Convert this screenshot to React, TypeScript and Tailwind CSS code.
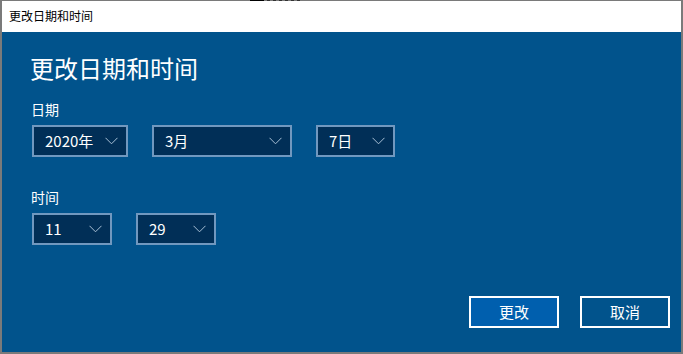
import React from "react";

const font = { fontFamily: '"Noto Sans CJK SC", "Noto Sans", sans-serif' };

function Chevron() {
  return (
    <svg width="13" height="8" viewBox="0 0 13 8" className="shrink-0">
      <polyline points="0.5,0.8 6.5,6.8 12.5,0.8" fill="none" stroke="#a9bfd5" strokeWidth="1" />
    </svg>
  );
}

function Select({ value, width }: { value: string; width: string }) {
  return (
    <div
      className={`${width} h-[32px] border-2 border-[#7198bf] bg-[#012f57] flex items-center justify-between pl-[11px] pr-[8px] text-[15px] leading-[20px] text-white`}
    >
      <span>{value}</span>
      <Chevron />
    </div>
  );
}

export default function App() {
  return (
    <div
      className="relative w-[683px] h-[354px] flex flex-col border-t border-l-2 border-r-2 border-b-2 border-[#7a7a7a] bg-white"
      style={font}
    >
      <div className="absolute -top-px left-[248px] flex h-px gap-[3px]">
        <div className="w-[14px] h-px bg-black" />
        <div className="w-[3px] h-px bg-[#333]" />
        <div className="w-[3px] h-px bg-[#333]" />
        <div className="w-[3px] h-px bg-[#333]" />
        <div className="w-[3px] h-px bg-[#333]" />
        <div className="w-[3px] h-px bg-[#333]" />
        <div className="w-[3px] h-px bg-[#333]" />
      </div>
      <div className="h-[31px] shrink-0 bg-white flex items-center pl-[7px] pb-px text-[12px] leading-[16px] text-black">
        更改日期和时间
      </div>
      <div className="flex-1 bg-[#01538c] flex flex-col pl-[30px] pr-[11px] pt-[20px] pb-[24px] text-white">
        <div className="text-[24px] leading-[32px] -ml-[2px]">更改日期和时间</div>
        <div className="mt-[15px] text-[14px] leading-[20px] -ml-px">日期</div>
        <div className="mt-[6px] flex">
          <Select value="2020年" width="w-[96px]" />
          <div className="ml-[24px]">
            <Select value="3月" width="w-[140px]" />
          </div>
          <div className="ml-[24px]">
            <Select value="7日" width="w-[79px]" />
          </div>
        </div>
        <div className="mt-[30px] text-[14px] leading-[20px] -ml-px">时间</div>
        <div className="mt-[6px] flex">
          <Select value="11" width="w-[80px]" />
          <div className="ml-[24px]">
            <Select value="29" width="w-[80px]" />
          </div>
        </div>
        <div className="mt-auto flex justify-end gap-[21px]">
          <button className="w-[90px] h-[32px] border-2 border-white bg-[#005fae] text-[15px] leading-[20px] text-white">
            更改
          </button>
          <button className="w-[90px] h-[32px] border-2 border-white bg-[#01538c] text-[15px] leading-[20px] text-white">
            取消
          </button>
        </div>
      </div>
    </div>
  );
}
